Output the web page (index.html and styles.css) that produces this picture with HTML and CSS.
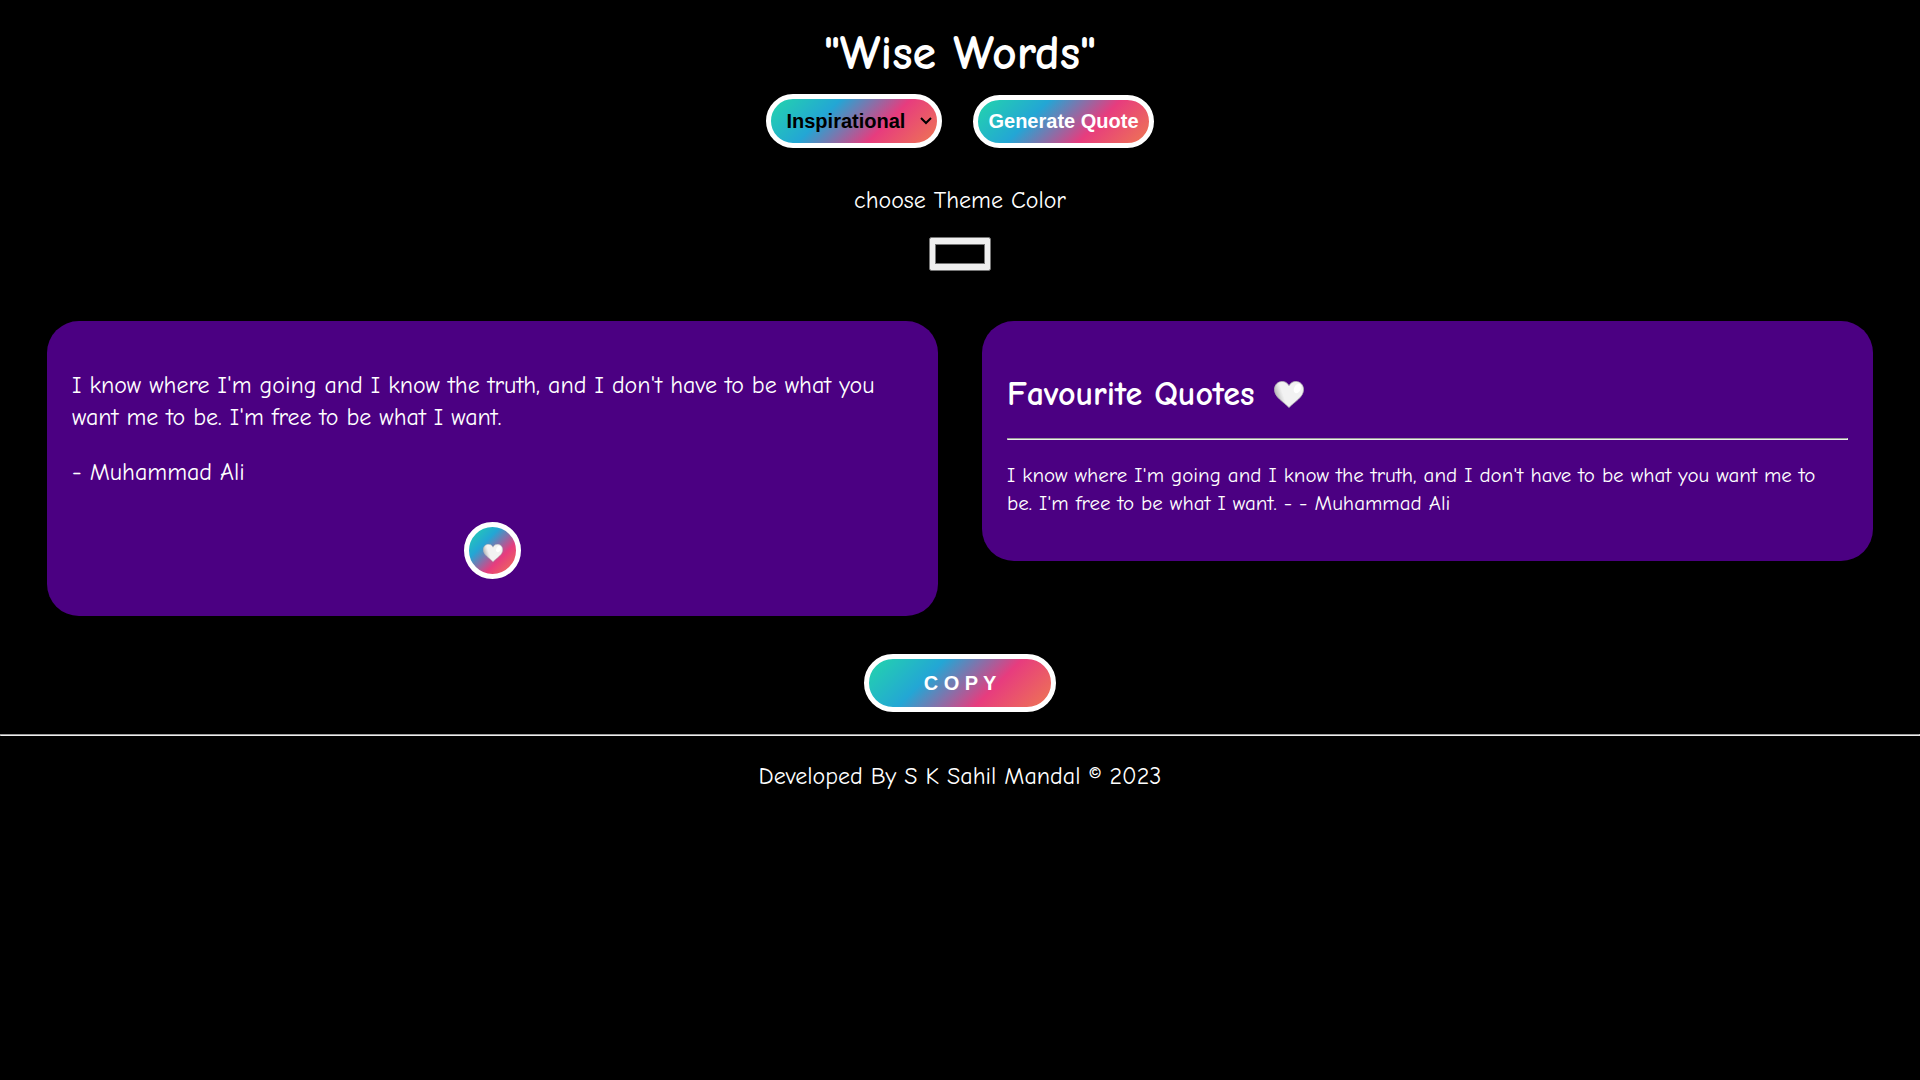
FILE: index.html
```html
<!DOCTYPE html>
<html lang="en">
<head>
<meta charset="utf-8">
<meta name="viewport" content="width=device-width, initial-scale=1">
<title>Wise Words</title>
<link rel="stylesheet" href="styles.css">
</head>
<body>
<svg class="defs" aria-hidden="true">
  <defs>
    <linearGradient id="heart-fill" x1="0" y1="0.300" x2="1" y2="0">
      <stop offset="0" stop-color="#bdbdbd"/>
      <stop offset="0.14" stop-color="#e2e2e2"/>
      <stop offset="0.22" stop-color="#f2f2f2"/>
      <stop offset="1" stop-color="#f2f2f2"/>
    </linearGradient>
    <symbol id="heart" viewBox="0 0 30 27">
      <path d="M15 4.800C13.200 1.500 10.800.5 8.200.5 3.800.5.500 3.800.500 8.600c0 7.600 8.500 11.800 14.500 17.900 6-6.100 14.500-10.300 14.500-17.900C29.500 3.800 26.200.5 21.800.5 19.200.5 16.800 1.500 15 4.800z" fill="url(#heart-fill)" stroke="#b9b9b9" stroke-width=".8"/>
      <ellipse cx="23.500" cy="7.500" rx="3.400" ry="5" transform="rotate(28 23.500 7.500)" fill="#fff"/>
    </symbol>
  </defs>
</svg>
<header class="header">
  <h1 class="title">"Wise Words"</h1>
  <div class="controls">
    <select class="pill category" aria-label="Quote category">
      <option>Inspirational</option>
    </select>
    <button class="pill generate" type="button">Generate Quote</button>
  </div>
  <label class="theme-label" for="theme">choose Theme Color</label>
  <input class="theme-input" type="color" id="theme" value="#000000">
</header>
<main class="cards">
  <section class="card quote-card">
    <p class="quote">I know where I'm going and I know the truth, and I don't have to be what you want me to be. I'm free to be what I want.</p>
    <p class="quote">- Muhammad Ali</p>
    <button class="pill like" type="button" aria-label="Add to favourites"><svg class="like-icon"><use href="#heart"/></svg></button>
  </section>
  <section class="card">
    <h2 class="card-title">Favourite Quotes <svg class="title-icon" aria-hidden="true"><use href="#heart"/></svg></h2>
    <hr class="rule">
    <p class="favourite">I know where I'm going and I know the truth, and I don't have to be what you want me to be. I'm free to be what I want. - - Muhammad Ali</p>
  </section>
</main>
<div class="actions">
  <button class="pill copy" type="button">C O P Y</button>
</div>
<hr class="rule">
<footer class="footer">Developed By S K Sahil Mandal © 2023</footer>
</body>
</html>
```

FILE: styles.css
```css
* {
  box-sizing: border-box;
}

body {
  margin: 0;
  background: #000;
  color: #fff;
  font-family: "Comic Sans MS", "Comic Neue", "Comic Relief", cursive;
  font-size: 24px;
  line-height: 32px;
}

.defs {
  position: absolute;
  width: 0;
  height: 0;
}

.header {
  display: flex;
  flex-direction: column;
  align-items: center;
  padding-top: 24px;
}

.title {
  margin: 0;
  font-size: 48px;
  line-height: 60px;
}

.controls {
  display: flex;
  align-items: flex-end;
  gap: 31px;
  margin-top: 10px;
}

.pill {
  border: 5px solid #fff;
  border-radius: 30px;
  background: linear-gradient(135deg, #23d5ab, #23a6d5, #e73c7e, #ee7752);
  color: #fff;
  font-family: "Liberation Sans", Arial, sans-serif;
  font-size: 20px;
  font-weight: bold;
}

.category {
  appearance: none;
  width: 176px;
  height: 54px;
  padding: 10px 0 10px 15px;
  background:
    url("data:image/svg+xml,%3Csvg xmlns='http://www.w3.org/2000/svg' width='12' height='8' viewBox='0 0 12 8'%3E%3Cpath d='M1 1l5 5 5-5' fill='none' stroke='%23000' stroke-width='2'/%3E%3C/svg%3E") right 5px center no-repeat,
    linear-gradient(135deg, #23d5ab, #23a6d5, #e73c7e, #ee7752);
  color: #000;
}

.generate {
  height: 53px;
  padding: 10px;
}

.theme-label {
  margin-top: 36px;
}

.theme-input {
  width: 62px;
  height: 34px;
  margin-top: 21px;
  padding: 2px 3px;
}

.cards {
  display: grid;
  grid-template-columns: 1fr 1fr;
  align-items: start;
  gap: 44px;
  margin-top: 50px;
  padding: 0 47px;
}

.card {
  display: flex;
  flex-direction: column;
  padding: 48px 25px 33px;
  border-radius: 32px;
  background: #4b0082;
}

.quote-card {
  padding-bottom: 37px;
}

.quote {
  margin: 0 0 23px;
}

.like {
  display: flex;
  align-items: center;
  justify-content: center;
  align-self: center;
  width: 57px;
  height: 57px;
  margin-top: 11px;
  padding: 4px 0 0;
}

.like-icon {
  width: 20px;
  height: 18px;
}

.card-title {
  display: flex;
  align-items: center;
  gap: 20px;
  margin: 0 0 20px;
  padding-top: 1px;
  font-size: 34px;
  line-height: 48px;
}

.title-icon {
  width: 30px;
  height: 27px;
}

.rule {
  width: 100%;
  margin: 0;
  border: 1px inset #eee;
}

.favourite {
  margin: 21px 0 11px;
  padding-right: 8px;
  font-size: 21px;
  line-height: 28px;
}

.actions {
  display: flex;
  justify-content: center;
  padding: 38px 0 22px;
}

.copy {
  width: 192px;
  height: 58px;
}

.footer {
  padding: 24px;
  text-align: center;
}
```
